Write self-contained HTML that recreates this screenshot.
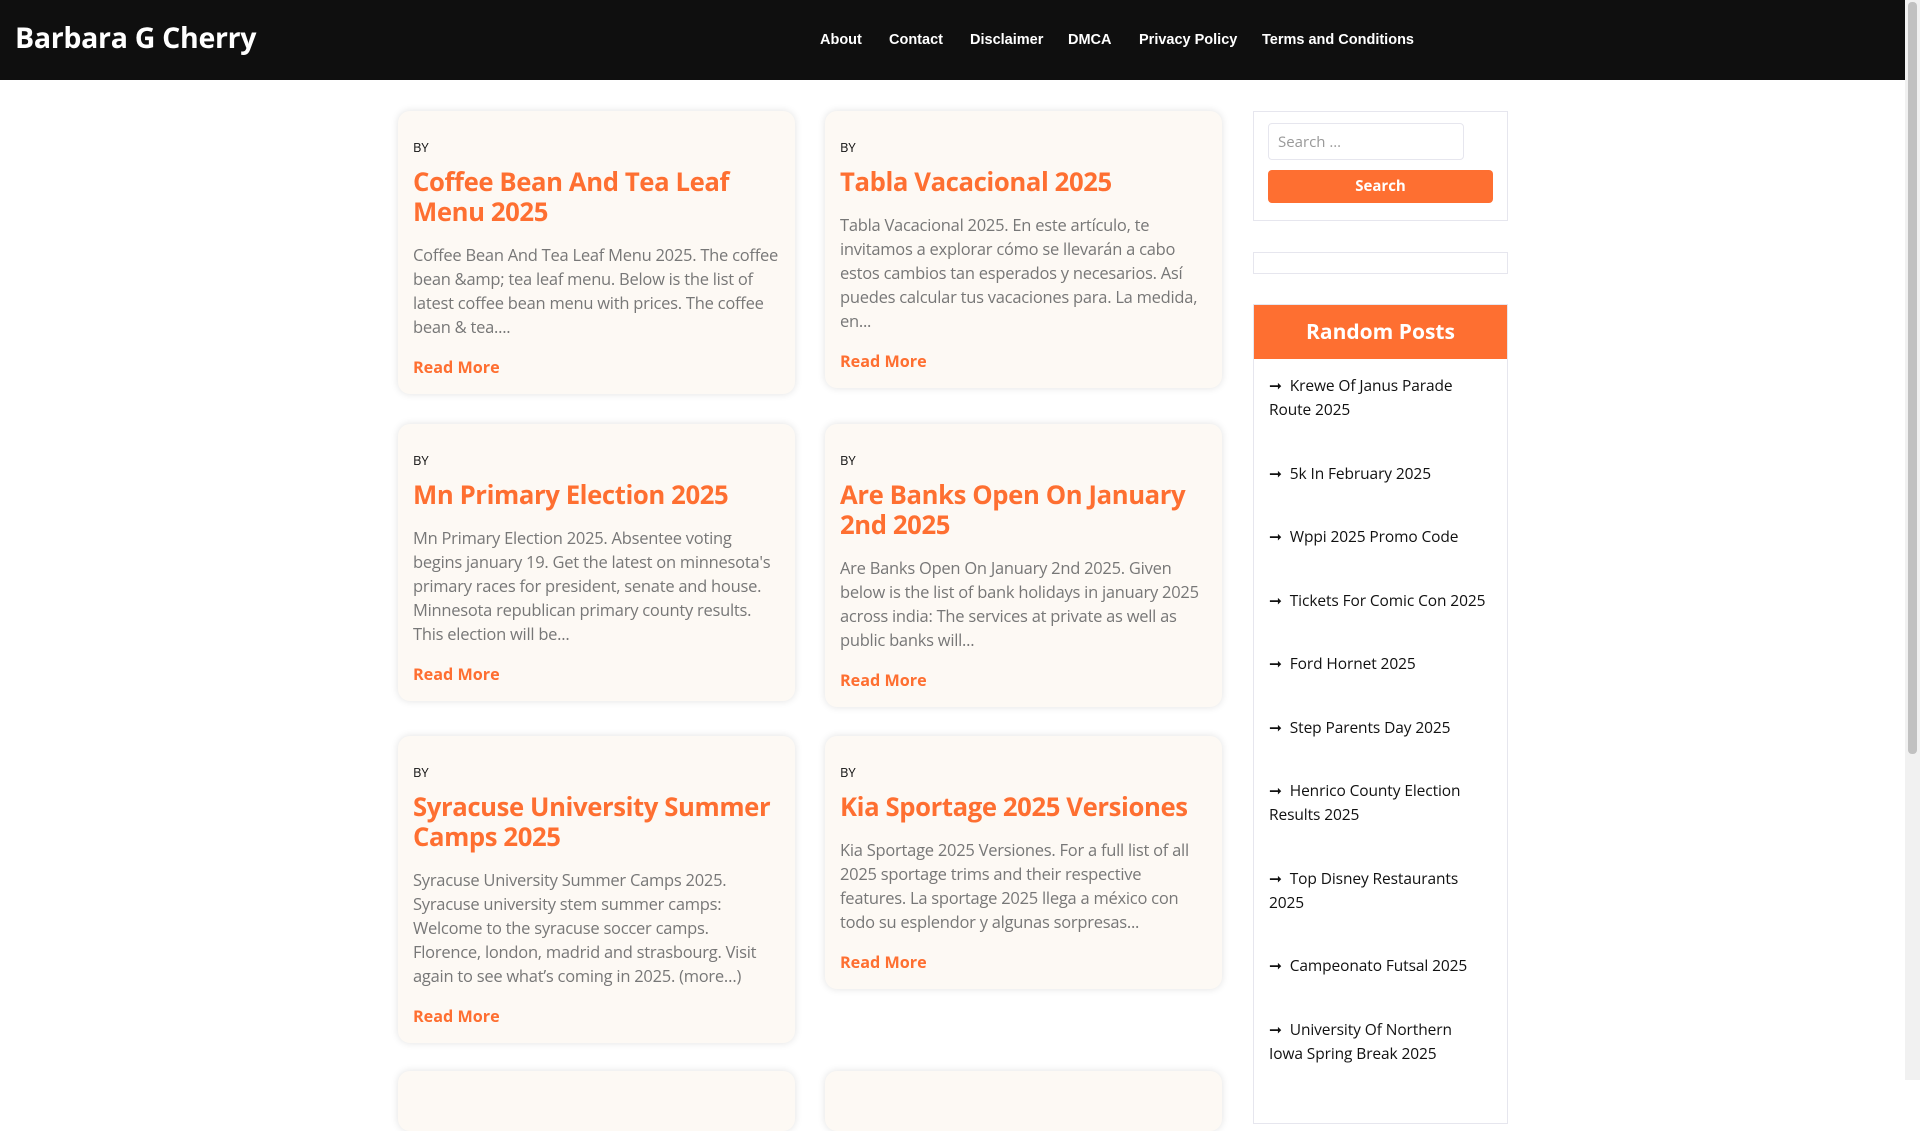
<!DOCTYPE html>
<html><head><meta charset="utf-8"><style>
*{margin:0;padding:0;box-sizing:border-box}
body{width:1920px;height:1080px;overflow:hidden;background:#fff;font-family:"Open Sans","DejaVu Sans","Liberation Sans",sans-serif;position:relative}
.hdr{position:absolute;left:0;top:0;width:1905px;height:80px;background:#0f0f0f}
.logo{position:absolute;left:15px;top:19px;color:#fff;font-size:28.5px;font-weight:bold;letter-spacing:-0.3px}
.nav a{position:absolute;top:32px;color:#fff;font:bold 14.5px "Liberation Sans",Arial,sans-serif;text-decoration:none}
.card{position:absolute;width:397px;background:#fdf9f4;border-radius:12px;box-shadow:0 0 8px rgba(0,0,0,.12);padding:26px 15px 15px}
.card .by{font-size:13px;line-height:20px;color:#111}
.card h2{margin-top:10px;font-size:25.7px;line-height:30px;color:#fe6f31;font-weight:bold;white-space:nowrap;letter-spacing:-0.4px}
.card p{margin-top:16px;font-size:16.5px;line-height:24px;color:#777;white-space:nowrap;letter-spacing:-0.25px}
.card .rm{margin-top:16px;font-size:16.2px;line-height:24px;color:#fe6f31;font-weight:bold}
.box{position:absolute;left:1253px;width:255px;border:1px solid #e6e6ee;background:#fff}
.sb{position:absolute;right:0;top:0;width:15px;height:1080px;background:#f1f1f1}
.sb div{position:absolute;left:3px;top:2px;width:9px;height:752px;background:#c1c1c1;border-radius:4px}
.rp li{list-style:none;padding:14px 15px 25.5px;font-size:15.5px;line-height:24px;color:#111;letter-spacing:-0.1px}
</style></head><body>
<div class="hdr"><div class="logo">Barbara G Cherry</div>
<div class="nav"><a style="left:820px">About</a><a style="left:889px">Contact</a><a style="left:970px">Disclaimer</a><a style="left:1068px">DMCA</a><a style="left:1139px">Privacy Policy</a><a style="left:1262px">Terms and Conditions</a></div></div>

<div class="card" style="left:398px;top:111px"><div class="by">BY</div><h2>Coffee Bean And Tea Leaf<br>Menu 2025</h2><p>Coffee Bean And Tea Leaf Menu 2025. The coffee<br>bean &amp;amp; tea leaf menu. Below is the list of<br>latest coffee bean menu with prices. The coffee<br>bean &amp; tea....</p><div class="rm">Read More</div></div>
<div class="card" style="left:825px;top:111px"><div class="by">BY</div><h2>Tabla Vacacional 2025</h2><p>Tabla Vacacional 2025. En este artículo, te<br>invitamos a explorar cómo se llevarán a cabo<br>estos cambios tan esperados y necesarios. Así<br>puedes calcular tus vacaciones para. La medida,<br>en...</p><div class="rm">Read More</div></div>
<div class="card" style="left:398px;top:424px"><div class="by">BY</div><h2>Mn Primary Election 2025</h2><p>Mn Primary Election 2025. Absentee voting<br>begins january 19. Get the latest on minnesota's<br>primary races for president, senate and house.<br>Minnesota republican primary county results.<br>This election will be...</p><div class="rm">Read More</div></div>
<div class="card" style="left:825px;top:424px"><div class="by">BY</div><h2>Are Banks Open On January<br>2nd 2025</h2><p>Are Banks Open On January 2nd 2025. Given<br>below is the list of bank holidays in january 2025<br>across india: The services at private as well as<br>public banks will...</p><div class="rm">Read More</div></div>
<div class="card" style="left:398px;top:736px"><div class="by">BY</div><h2>Syracuse University Summer<br>Camps 2025</h2><p>Syracuse University Summer Camps 2025.<br>Syracuse university stem summer camps:<br>Welcome to the syracuse soccer camps.<br>Florence, london, madrid and strasbourg. Visit<br>again to see what’s coming in 2025. (more…)</p><div class="rm">Read More</div></div>
<div class="card" style="left:825px;top:736px"><div class="by">BY</div><h2>Kia Sportage 2025 Versiones</h2><p>Kia Sportage 2025 Versiones. For a full list of all<br>2025 sportage trims and their respective<br>features. La sportage 2025 llega a méxico con<br>todo su esplendor y algunas sorpresas...</p><div class="rm">Read More</div></div>
<div class="card" style="left:398px;top:1071px;height:60px"></div>
<div class="card" style="left:825px;top:1071px;height:60px"></div>

<div class="box" style="top:111px;height:110px">
<div style="position:absolute;left:14px;top:11px;width:196px;height:37px;border:1px solid #e6e6ee;border-radius:4px;color:#999;font-size:15px;padding:8px 9px">Search …</div>
<div style="position:absolute;left:14px;top:58px;width:225px;height:33px;background:#fe6f31;border-radius:4px;color:#fff;font-size:15px;font-weight:bold;text-align:center;line-height:33px">Search</div>
</div>
<div class="box" style="top:252px;height:22px"></div>
<div class="box" style="top:304px;height:820px">
<div style="height:54px;background:#fe6f31;color:#fff;font-size:21px;font-weight:bold;text-align:center;line-height:54px">Random Posts</div>
<ul class="rp">
<li>➞&nbsp;&nbsp;Krewe Of Janus Parade<br>Route 2025</li>
<li>➞&nbsp;&nbsp;5k In February 2025</li>
<li>➞&nbsp;&nbsp;Wppi 2025 Promo Code</li>
<li>➞&nbsp;&nbsp;Tickets For Comic Con 2025</li>
<li>➞&nbsp;&nbsp;Ford Hornet 2025</li>
<li>➞&nbsp;&nbsp;Step Parents Day 2025</li>
<li>➞&nbsp;&nbsp;Henrico County Election<br>Results 2025</li>
<li>➞&nbsp;&nbsp;Top Disney Restaurants<br>2025</li>
<li>➞&nbsp;&nbsp;Campeonato Futsal 2025</li>
<li>➞&nbsp;&nbsp;University Of Northern<br>Iowa Spring Break 2025</li>
</ul></div>
<div class="sb"><div></div></div>
</body></html>
